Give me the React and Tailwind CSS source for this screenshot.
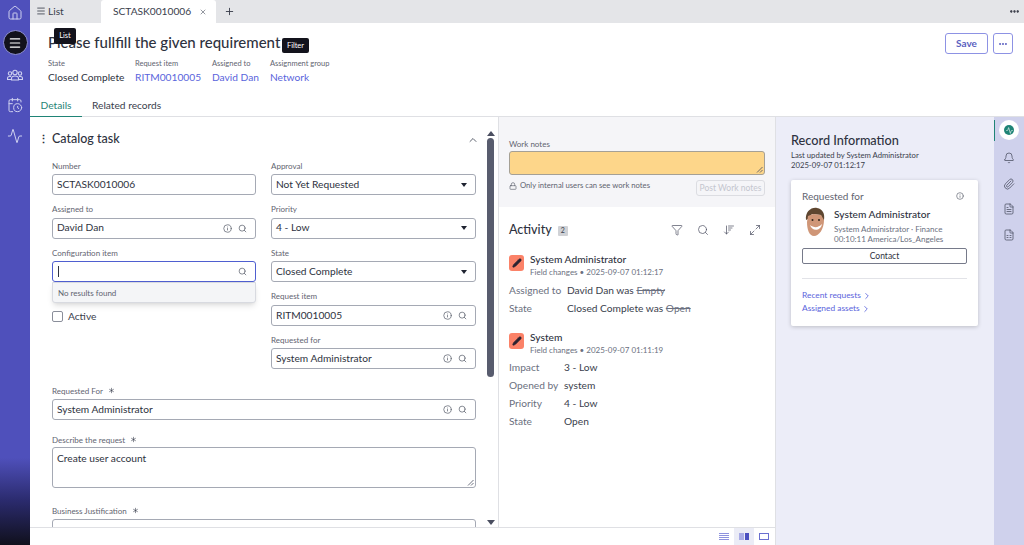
import React from 'react';
import {
  House, CalendarClock, Activity, Menu, X, Plus, Ellipsis, ChevronUp, ChevronRight,
  Info, Search, Funnel, ArrowDownWideNarrow, Maximize2, Lock, Pencil, Bell, Paperclip, FileText, FileSpreadsheet, Asterisk,
} from 'lucide-react';

const Field = ({ label, value, required, lookup, select, className = '' }) => (
  <div className={`flex flex-col ${className}`}>
    <div className="flex items-center h-[13px] text-[8px] text-[#5f6470] leading-none">
      {label}
      {required && <Asterisk size={9} strokeWidth={1.6} className="ml-1 text-[#3c4150]" />}
    </div>
    <div className="mt-[2px] h-[21px] flex items-center pl-[4px] pr-[5px] border border-[#a5a9b4] rounded-[3px] text-[10.2px] text-[#2e3240] bg-white">
      <span className="flex-1">{value}</span>
      {lookup && <Info size={9} className="mr-[6px] text-[#5f6470]" />}
      {lookup && <Search size={9} className="mr-[3px] text-[#5f6470]" />}
      {select && <span className="mr-[3px] border-x-[3.5px] border-x-transparent border-t-[4px] border-t-[#1f2330]" />}
    </div>
  </div>
);

const Meta = ({ label, value, link }) => (
  <div className="flex flex-col">
    <span className="mt-[2px] text-[7.5px] text-[#5f6470] leading-[12px]">{label}</span>
    <span className={`text-[10.2px] leading-[15px] ${link ? 'text-[#5a64dc]' : 'text-[#2e3240]'}`}>{value}</span>
  </div>
);

const EditBadge = () => (
  <div className="w-[15px] h-[16px] mt-[3px] rounded-[3px] bg-[#fb8268] flex items-center justify-center">
    <Pencil size={10} fill="#2a2230" className="text-[#2a2230]" />
  </div>
);

const ChangeRow = ({ label, width, children }) => (
  <div className="flex items-center h-[18px] text-[10.2px]">
    <span className={`text-[#6b7080] ${width}`}>{label}</span>
    <span className="text-[#3a3e4c]">{children}</span>
  </div>
);

const Grip = () => (
  <svg width="7" height="7" viewBox="0 0 7 7" className="absolute right-[1px] bottom-[1px] text-[#4a4e60]">
    <path d="M1 6.500L6.500 1M4 6.500L6.500 4" stroke="currentColor" strokeWidth="0.8" />
  </svg>
);

// Icono de grupo de personas (no hay uno igual en lucide)
const GroupIcon = () => (
  <svg width="16" height="12" viewBox="0 0 16 12" fill="none" stroke="currentColor" strokeWidth="1.1" className="mt-[14px]">
    <circle cx="8" cy="3.500" r="2.200" />
    <circle cx="3" cy="4.500" r="1.700" />
    <circle cx="13" cy="4.500" r="1.700" />
    <path d="M4.500 11V9.500C4.500 7.800 6 7 8 7s3.500.8 3.500 2.500V11z" />
    <path d="M4 7.500H2.500C1.300 7.500.5 8.200.5 9.500V10.500H4.500M12 7.500h1.500c1.200 0 2 .7 2 2v1h-4" />
  </svg>
);

const Face = () => (
  <svg width="24" height="30" viewBox="0 0 24 30">
    <path d="M3 13C2 5 8 0 14 1c6 1 8 6 7 12l-2 1-1-6-9-1-4 5z" fill="#5e4630" />
    <path d="M5 9l5-2 8 1 3 5c0 9-5 16-10 16-5 0-7-7-7-14z" fill="#cf9677" />
    <path d="M7 18c4 3 8 3 12-1-1 7-10 8-12 1z" fill="#fff" />
    <circle cx="9.500" cy="13" r="1" fill="#33261c" />
    <circle cx="16" cy="13" r="1" fill="#33261c" />
  </svg>
);

const App = () => {
  return (
    <div className="w-[1024px] h-[545px] overflow-hidden flex relative bg-white font-['Lato',sans-serif]">
      {/* Barra lateral */}
      <aside className="w-[30px] shrink-0 flex flex-col items-center bg-[linear-gradient(to_bottom,#4f50bb_0%,#4f50bb_84%,#2a2a6c_92%,#10101c_100%)] text-[#cfd1f0]">
        <House size={16} strokeWidth={1.5} className="mt-[5px]" />
        <div className="mt-[9px] w-[25px] h-[25px] rounded-full bg-[#12121c] border border-[#8f90d8] flex items-center justify-center text-white">
          <Menu size={14} />
        </div>
        <GroupIcon />
        <CalendarClock size={16} strokeWidth={1.5} className="mt-[16px]" />
        <Activity size={16} strokeWidth={1.5} className="mt-[15px]" />
      </aside>

      <div className="flex-1 flex flex-col min-w-0">
        {/* Pestañas */}
        <div className="h-[23px] shrink-0 flex items-center bg-[#e4e5e8] text-[10.2px] text-[#3a3e4c]">
          <div className="w-[71px] flex items-center pl-[6px]">
            <Menu size={10} className="mr-[2px]" />
            List
          </div>
          <div className="w-[115px] h-full bg-white rounded-t-[3px] flex items-center pl-[12px]">
            SCTASK0010006
            <X size={8} className="ml-[8px] text-[#5f6470]" />
          </div>
          <Plus size={11} className="ml-[8px]" />
          <Ellipsis size={11} className="ml-auto mr-[4px] text-[#1f2330]" strokeWidth={3} />
        </div>

        {/* Encabezado */}
        <div className="h-[71px] shrink-0 pl-[18px] pr-[11px] flex justify-between">
          <div>
            <h1 className="mt-[8px] text-[15px] leading-[22px] text-[#2e3240] font-medium">Please fullfill the given requirement</h1>
            <div className="mt-[3px] flex">
              <div className="w-[87px]"><Meta label="State" value="Closed Complete" /></div>
              <div className="w-[77px]"><Meta label="Request item" value="RITM0010005" link /></div>
              <div className="w-[58px]"><Meta label="Assigned to" value="David Dan" link /></div>
              <Meta label="Assignment group" value="Network" link />
            </div>
          </div>
          <div className="mt-[10px] flex gap-[5px]">
            <button className="w-[43px] h-[21px] border border-[#8d92e4] rounded-[3px] text-[10px] font-bold text-[#5a5fc0]">Save</button>
            <button className="w-[20px] h-[21px] border border-[#8d92e4] rounded-[3px] flex items-center justify-center text-[#5a5fc0]">
              <Ellipsis size={10} strokeWidth={3} />
            </button>
          </div>
        </div>

        <div className="h-[23px] shrink-0 flex items-stretch border-b border-[#dfe0e4] text-[10.2px]">
          <div className="w-[52px] flex items-center justify-center pt-[1px] text-[#1f8476] border-b border-[#1f8476] -mb-px">Details</div>
          <div className="ml-[10px] flex items-center pt-[1px] text-[#3a3e4c]">Related records</div>
        </div>

        {/* Cuerpo */}
        <div className="flex-1 flex min-h-0">
          <div className="w-[745px] flex flex-col min-w-0">
            <div className="flex-1 flex min-h-0">
              {/* Formulario */}
              <div className="w-[469px] border-r border-[#dfe0e4] flex min-h-0">
                <div className="w-[457px] pl-[22px] overflow-hidden">
                  <div className="h-[42px] flex items-center pt-[3px] -ml-[14px]">
                    <span className="text-[#2e3240] font-black text-[11px] w-[14px]">⋮</span>
                    <span className="text-[12.5px] font-medium text-[#2e3240]">Catalog task</span>
                    <ChevronUp size={12} className="ml-auto mr-[7px] text-[#5f6470]" />
                  </div>
                  <div className="w-[424px] grid grid-cols-[204px_205px] gap-x-[15px]">
                    <div className="flex flex-col gap-[7.6px]">
                      <Field label="Number" value="SCTASK0010006" />
                      <Field label="Assigned to" value="David Dan" lookup />
                      <div className="relative">
                        <div className="flex items-center h-[13px] text-[8px] text-[#5f6470] leading-none">Configuration item</div>
                        <div className="mt-[2px] h-[21px] flex items-center px-[5px] border-[1.5px] border-[#4f5fd0] rounded-[3px]">
                          <span className="w-px h-[11px] bg-[#2e3240]" />
                          <Search size={9} className="ml-auto mr-[3px] text-[#5f6470]" />
                        </div>
                        <div className="absolute left-0 right-0 top-[36px] h-[21px] z-10 flex items-center px-[5px] bg-[#f4f5f7] border border-[#d8dae0] rounded-b-[3px] shadow-md text-[8px] text-[#5f6470]">
                          No results found
                        </div>
                      </div>
                      <label className="mt-[19px] flex items-center text-[10.2px] text-[#3a3e4c]">
                        <span className="w-[11px] h-[11px] border border-[#8a8e9a] rounded-[2px] mr-[5px]" />
                        Active
                      </label>
                    </div>
                    <div className="flex flex-col gap-[7.6px]">
                      <Field label="Approval" value="Not Yet Requested" select />
                      <Field label="Priority" value="4 - Low" select />
                      <Field label="State" value="Closed Complete" select />
                      <Field label="Request item" value="RITM0010005" lookup />
                      <Field label="Requested for" value="System Administrator" lookup />
                    </div>
                  </div>
                  <div className="w-[424px] mt-[15px]">
                    <Field label="Requested For" value="System Administrator" required lookup />
                    <div className="mt-[13px]">
                      <div className="flex items-center h-[13px] text-[8px] text-[#5f6470] leading-none">
                        Describe the request
                        <Asterisk size={9} strokeWidth={1.6} className="ml-1 text-[#3c4150]" />
                      </div>
                      <div className="relative mt-[1px] h-[41px] px-[4px] pt-[3px] border border-[#a5a9b4] rounded-[3px] text-[10.2px] leading-[15px] text-[#2e3240]">
                        Create user account
                        <Grip />
                      </div>
                    </div>
                    <div className="mt-[16px]">
                      <div className="flex items-center h-[13px] text-[8px] text-[#5f6470] leading-none">
                        Business Justification
                        <Asterisk size={9} strokeWidth={1.6} className="ml-1 text-[#3c4150]" />
                      </div>
                      <div className="mt-[2px] h-[40px] px-[4px] pt-[3px] border border-[#a5a9b4] rounded-[3px] text-[10.2px] text-[#2e3240]">
                        need user
                      </div>
                    </div>
                  </div>
                </div>
                {/* Scrollbar */}
                <div className="w-[12px] flex flex-col items-center pt-[14px] pb-[2px] pr-[3px]">
                  <span className="border-x-[4px] border-x-transparent border-b-[5px] border-b-[#4a4e60]" />
                  <span className="mt-[2px] h-[239px] w-[7px] rounded-full bg-[#585c6e]" />
                  <span className="mt-auto border-x-[4px] border-x-transparent border-t-[5px] border-t-[#4a4e60]" />
                </div>
              </div>

              {/* Actividad */}
              <div className="flex-1 min-w-0 flex flex-col">
                <div className="h-[90px] bg-[#f5f5f8] px-[10px] pt-[22px]">
                  <div className="text-[8px] leading-[10px] text-[#5f6470]">Work notes</div>
                  <div className="relative mt-[2px] h-[24px] bg-[#fdd68a] border border-[#a5a095] rounded-[3px]"><Grip /></div>
                  <div className="flex items-start justify-between mt-[5px]">
                    <div className="flex items-center text-[7.7px] text-[#5f6470]">
                      <Lock size={8} className="mr-[3px]" />
                      Only internal users can see work notes
                    </div>
                    <div className="w-[69px] h-[16px] border border-[#dcdde2] rounded-[3px] text-[8.5px] text-[#c4c6cf] flex items-center justify-center">Post Work notes</div>
                  </div>
                </div>
                <div className="px-[10px]">
                  <div className="h-[45px] flex items-center">
                    <span className="mt-[2px] text-[12.5px] font-medium text-[#2e3240]">Activity</span>
                    <span className="ml-[6px] mt-[2px] w-[10px] h-[10px] bg-[#d0d2d6] rounded-[1px] text-[7px] text-[#3a3e4c] flex items-center justify-center">2</span>
                    <div className="ml-auto flex items-center gap-[14px] text-[#4a4e60] pr-[4px]">
                      <Funnel size={12} strokeWidth={1.4} />
                      <Search size={12} strokeWidth={1.4} />
                      <ArrowDownWideNarrow size={12} strokeWidth={1.4} />
                      <Maximize2 size={12} strokeWidth={1.4} />
                    </div>
                  </div>
                  <div className="flex gap-[6px]">
                    <EditBadge />
                    <div>
                      <div className="text-[10.2px] leading-[14px] text-[#2e3240] font-medium">System Administrator</div>
                      <div className="text-[8px] leading-[13px] text-[#6b7080]">Field changes • 2025-09-07 01:12:17</div>
                    </div>
                  </div>
                  <div className="mt-[3px]">
                    <ChangeRow label="Assigned to" width="w-[58px]">David Dan was <s className="text-[#6b7080]">Empty</s></ChangeRow>
                    <ChangeRow label="State" width="w-[58px]">Closed Complete was <s className="text-[#6b7080]">Open</s></ChangeRow>
                  </div>
                  <div className="flex gap-[6px] mt-[12px]">
                    <EditBadge />
                    <div>
                      <div className="text-[10.2px] leading-[14px] text-[#2e3240] font-medium">System</div>
                      <div className="text-[8px] leading-[13px] text-[#6b7080]">Field changes • 2025-09-07 01:11:19</div>
                    </div>
                  </div>
                  <div className="mt-[2px]">
                    <ChangeRow label="Impact" width="w-[55px]">3 - Low</ChangeRow>
                    <ChangeRow label="Opened by" width="w-[55px]">system</ChangeRow>
                    <ChangeRow label="Priority" width="w-[55px]">4 - Low</ChangeRow>
                    <ChangeRow label="State" width="w-[55px]">Open</ChangeRow>
                  </div>
                </div>
              </div>
            </div>

            {/* Barra inferior */}
            <div className="h-[18px] shrink-0 border-t border-[#dfe0e4] flex items-stretch justify-end pr-[1px]">
              <div className="w-[21px] flex items-center justify-center">
                <span className="w-[10px] h-[7px] bg-[repeating-linear-gradient(to_bottom,#8e92de_0,#8e92de_1px,transparent_1px,transparent_2px)]" />
              </div>
              <div className="w-[20px] flex items-center justify-center gap-px bg-[#ebecf6]">
                <span className="w-[5px] h-[7px] bg-[#a9ace6]" />
                <span className="w-[4px] h-[7px] bg-[#4a4fc0]" />
              </div>
              <div className="w-[20px] flex items-center justify-center">
                <span className="w-[10px] h-[7px] border border-[#6a6fd0]" />
              </div>
            </div>
          </div>

          {/* Información del registro */}
          <div className="w-[219px] shrink-0 bg-[#ecedf8] border-l border-[#dfe0e4] pl-[15px] pt-[15px]">
            <h2 className="text-[12.7px] leading-[17px] font-medium text-[#2e3240]">Record Information</h2>
            <div className="mt-[1px] text-[7.7px] leading-[10px] text-[#3a3e4c]">Last updated by System Administrator</div>
            <div className="text-[7.7px] leading-[10px] text-[#3a3e4c]">2025-09-07 01:12:17</div>
            <div className="mt-[10px] w-[187px] h-[146px] bg-white rounded-[2px] shadow-[0_1px_4px_rgba(0,0,0,0.2)] px-[11px] pt-[9px]">
              <div className="flex items-center justify-between pr-[3px] text-[10px] leading-[14px] text-[#5f6470]">
                Requested for
                <Info size={8} />
              </div>
              <div className="flex mt-[4px]">
                <div className="w-[32px] pl-[1px]"><Face /></div>
                <div>
                  <div className="text-[10.2px] leading-[14px] font-medium text-[#2e3240]">System Administrator</div>
                  <div className="mt-[3px] text-[8px] leading-[10px] text-[#6b7080]">System Administrator · Finance</div>
                  <div className="text-[8px] leading-[10px] text-[#6b7080]">00:10:11 America/Los_Angeles</div>
                </div>
              </div>
              <div className="mt-[4px] h-[16px] border border-[#767a8a] rounded-[2px] text-[8.5px] text-[#2e3240] flex items-center justify-center">Contact</div>
              <div className="mt-[14px] border-t border-[#e2e3e8] pt-[10px] text-[8.4px] text-[#5a64dc]">
                <div className="h-[13px] flex items-center">Recent requests<ChevronRight size={10} className="ml-[1px]" /></div>
                <div className="h-[13px] flex items-center">Assigned assets<ChevronRight size={10} className="ml-[1px]" /></div>
              </div>
            </div>
          </div>

          {/* Barra de herramientas derecha */}
          <div className="w-[30px] shrink-0 bg-[#cfd1ec] flex flex-col items-center text-[#4a4e60] relative">
            <span className="absolute left-0 top-[3px] h-[21px] w-px bg-[#1f8476]" />
            <div className="mt-[3px] w-[20px] h-[20px] rounded-full bg-white flex items-center justify-center">
              <div className="w-[10px] h-[10px] rounded-full bg-[#1f8476] flex items-center justify-center">
                <Activity size={7} className="text-white" />
              </div>
            </div>
            <Bell size={12} className="mt-[12px]" strokeWidth={1.5} />
            <Paperclip size={12} className="mt-[14px]" strokeWidth={1.5} />
            <FileText size={12} className="mt-[13px]" strokeWidth={1.5} />
            <FileSpreadsheet size={12} className="mt-[14px]" strokeWidth={1.5} />
          </div>
        </div>
      </div>

      {/* Tooltips */}
      <div className="absolute left-[54px] top-[28px] w-[22px] h-[16px] rounded-[2px] bg-[#13131c] text-white text-[7.5px] flex items-center justify-center">List</div>
      <div className="absolute left-[282px] top-[38px] w-[27px] h-[15px] rounded-[2px] bg-[#13131c] text-white text-[7.5px] flex items-center justify-center">Filter</div>
    </div>
  );
};

export default App;
